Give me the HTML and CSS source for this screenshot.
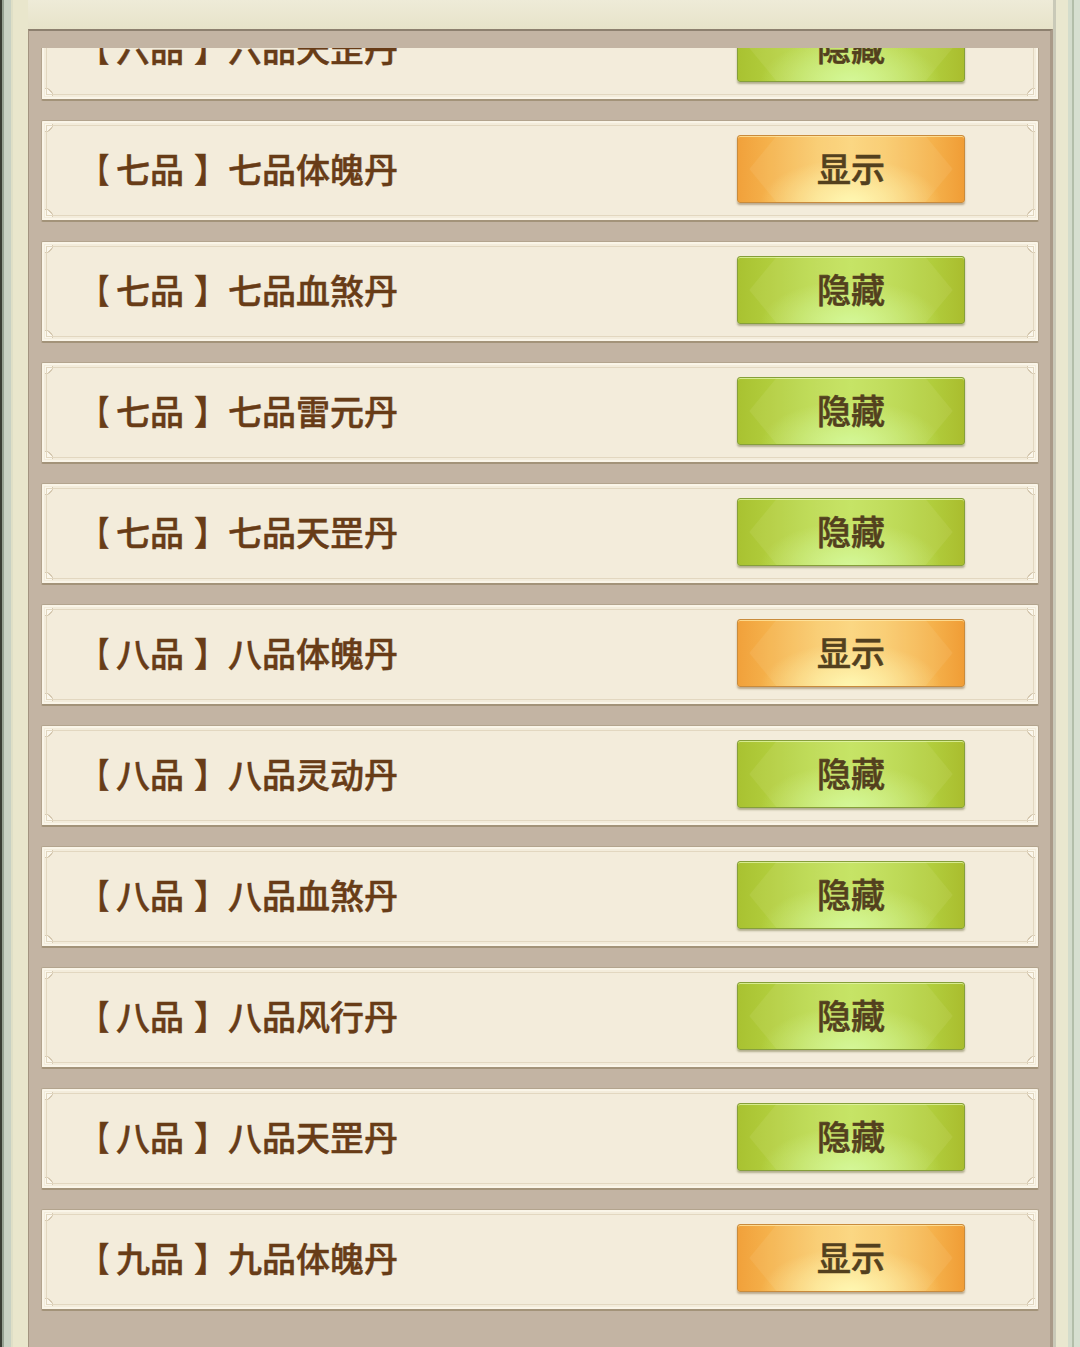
FILE: index.html
```html
<!DOCTYPE html>
<html lang="zh">
<head>
<meta charset="utf-8">
<title>丹药显示设置</title>
<link rel="stylesheet" href="styles.css">
</head>
<body>
<div class="frame">
  <div class="edge-left"></div>
  <div class="main">
    <div class="top-band"></div>
    <div class="panel">
      <div class="viewport">
        <ul class="list">
          <li class="card"><div class="label"><span class="open">【</span>六品<span class="close">】六品天罡丹</span></div><button class="btn hide">隐藏</button></li>
          <li class="card"><div class="label"><span class="open">【</span>七品<span class="close">】七品体魄丹</span></div><button class="btn show">显示</button></li>
          <li class="card"><div class="label"><span class="open">【</span>七品<span class="close">】七品血煞丹</span></div><button class="btn hide">隐藏</button></li>
          <li class="card"><div class="label"><span class="open">【</span>七品<span class="close">】七品雷元丹</span></div><button class="btn hide">隐藏</button></li>
          <li class="card"><div class="label"><span class="open">【</span>七品<span class="close">】七品天罡丹</span></div><button class="btn hide">隐藏</button></li>
          <li class="card"><div class="label"><span class="open">【</span>八品<span class="close">】八品体魄丹</span></div><button class="btn show">显示</button></li>
          <li class="card"><div class="label"><span class="open">【</span>八品<span class="close">】八品灵动丹</span></div><button class="btn hide">隐藏</button></li>
          <li class="card"><div class="label"><span class="open">【</span>八品<span class="close">】八品血煞丹</span></div><button class="btn hide">隐藏</button></li>
          <li class="card"><div class="label"><span class="open">【</span>八品<span class="close">】八品风行丹</span></div><button class="btn hide">隐藏</button></li>
          <li class="card"><div class="label"><span class="open">【</span>八品<span class="close">】八品天罡丹</span></div><button class="btn hide">隐藏</button></li>
          <li class="card"><div class="label"><span class="open">【</span>九品<span class="close">】九品体魄丹</span></div><button class="btn show">显示</button></li>
        </ul>
      </div>
    </div>
  </div>
  <div class="edge-right"></div>
</div>
</body>
</html>
```

FILE: styles.css
```css
* { box-sizing: border-box; }

html, body {
  margin: 0;
  padding: 0;
  width: 1080px;
  height: 1347px;
  overflow: hidden;
  background: #e9e6cd;
  font-family: "Noto Sans CJK SC", "Noto Sans", sans-serif;
}

.frame {
  display: flex;
  width: 1080px;
  height: 1347px;
}

.edge-left {
  width: 28px;
  flex: none;
  background: linear-gradient(to right,
    #3a3e35 0 2px,
    #96a293 2px 4px,
    #c8d1c3 4px 11px,
    #dfdfc6 11px 13px,
    #e9e6cc 13px 28px);
}

.edge-right {
  width: 27px;
  flex: none;
  background: linear-gradient(to right,
    #c9c9b8 0 3px,
    #e9e7cf 3px 15px,
    #d3dccc 15px 19px,
    #b2bea9 19px 21px,
    #d6dfd0 21px 27px);
}

.main {
  flex: 1;
  display: flex;
  flex-direction: column;
  min-width: 0;
}

.top-band {
  height: 29px;
  flex: none;
  background: linear-gradient(to bottom, #eeebd8, #e7e3c9);
}

.panel {
  flex: 1;
  min-height: 0;
  background: #c3b4a3;
  border-top: 2px solid #8d806f;
  border-left: 1px solid #a39480;
  border-right: 3px solid #a99a88;
  padding: 17px 11px 0 12px;
  display: flex;
  flex-direction: column;
}

.viewport {
  flex: 1;
  overflow: hidden;
}

.list {
  list-style: none;
  margin: -49px 0 0 0;
  padding: 0;
  display: flex;
  flex-direction: column;
  gap: 19px;
}

.card {
  position: relative;
  height: 102px;
  display: flex;
  align-items: center;
  justify-content: space-between;
  padding: 0 73px 3px 40px;
  border: 1px solid #b3a48e;
  border-bottom: 2px solid #a39379;
  border-radius: 2px;
  background:
    radial-gradient(circle at 0 0, #fbf7ec 0 7px, #d6c9b1 7px 8px, transparent 8.5px) 3px 3px / 13px 13px no-repeat,
    radial-gradient(circle at 100% 0, #fbf7ec 0 7px, #d6c9b1 7px 8px, transparent 8.5px) calc(100% - 3px) 3px / 13px 13px no-repeat,
    radial-gradient(circle at 0 100%, #fbf7ec 0 7px, #d6c9b1 7px 8px, transparent 8.5px) 3px calc(100% - 3px) / 13px 13px no-repeat,
    radial-gradient(circle at 100% 100%, #fbf7ec 0 7px, #d6c9b1 7px 8px, transparent 8.5px) calc(100% - 3px) calc(100% - 3px) / 13px 13px no-repeat,
    #f3ecdb;
  box-shadow: inset 0 0 0 2px #faf5e8;
}

.card::before {
  content: "";
  position: absolute;
  inset: 4px;
  border: 1px solid #e2d7c0;
  pointer-events: none;
}

.label {
  font-size: 34px;
  font-weight: 500;
  line-height: 1;
  color: #683c17;
  white-space: nowrap;
  position: relative;
  -webkit-text-stroke: 0.5px #683c17;
}

.open {
  display: inline-block;
  margin-left: -4px;
  margin-right: 4px;
  transform: scaleX(0.8);
  transform-origin: 60% 50%;
}

.close {
  margin-left: 10px;
}

.btn {
  position: relative;
  width: 228px;
  height: 68px;
  flex: none;
  border-radius: 3px;
  font-family: inherit;
  font-size: 34px;
  font-weight: 500;
  line-height: 1;
  color: #45300e;
  -webkit-text-stroke: 0.6px #45300e;
  cursor: pointer;
  padding: 0 0 2px 0;
  overflow: hidden;
}

.btn::before {
  content: "";
  position: absolute;
  inset: 0;
  clip-path: polygon(5% 50%, 17% 0, 83% 0, 95% 50%, 83% 100%, 17% 100%);
  background: rgba(255, 255, 230, 0.08);
  pointer-events: none;
}

.btn.show {
  border: 1px solid #c98b3c;
  background:
    radial-gradient(ellipse 40% 65% at 50% 100%, rgba(255, 248, 176, 0.95), rgba(255, 240, 150, 0) 100%),
    linear-gradient(to right, #f1a13b 0%, #f5b24c 14%, #f9ca6d 35%, #fbd47b 50%, #f9ca6d 65%, #f5b24c 86%, #f09d36 100%);
  box-shadow: 0 2px 2px rgba(120, 90, 50, 0.45), inset 0 1px 0 rgba(255, 230, 160, 0.8);
}

.btn.hide {
  border: 1px solid #869f3a;
  background:
    radial-gradient(ellipse 40% 65% at 50% 100%, rgba(210, 248, 148, 0.95), rgba(200, 240, 120, 0) 100%),
    linear-gradient(to right, #a9c231 0%, #b1cd3c 14%, #bcdb52 35%, #c2e25c 50%, #bcdb52 65%, #b1cd3c 86%, #aabd2e 100%);
  box-shadow: 0 2px 2px rgba(100, 100, 50, 0.45), inset 0 1px 0 rgba(225, 245, 165, 0.8);
}
```
